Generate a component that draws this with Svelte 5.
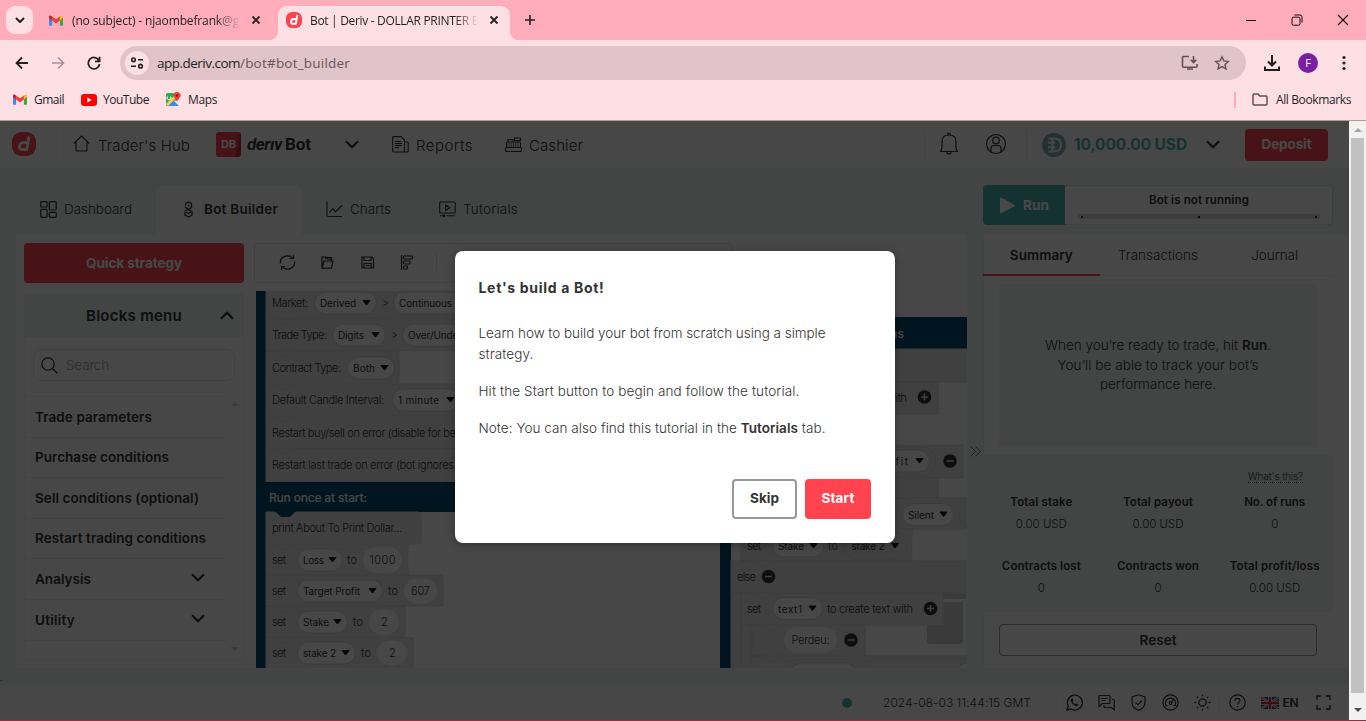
<script>
  function fit(node, width) {
    const natural = node.getBoundingClientRect().width;
    const count = node.textContent.trim().length;
    node.style.letterSpacing = (width - natural) / count + 'px';
  }

  const menu = [
    ['Trade parameters', 117, false],
    ['Purchase conditions', 134, false],
    ['Sell conditions (optional)', 164, false],
    ['Restart trading conditions', 171, false],
    ['Analysis', 56, true],
    ['Utility', 40, true]
  ];

  const stats = [
    ['Total stake', 62, '0.00 USD', 51],
    ['Total payout', 70, '0.00 USD', 51],
    ['No. of runs', 61, '0', 7],
    ['Contracts lost', 79, '0', 7],
    ['Contracts won', 82, '0', 7],
    ['Total profit/loss', 90, '0.00 USD', 51]
  ];

  // Block shapes on the canvas: x, y, width, height
  const blocks = [
    [266, 286, 454, 33], [266, 318.5, 454, 32], [266, 351, 133, 33], [266, 384, 454, 32],
    [266, 416, 454, 33], [266, 448.5, 454, 33],
    [266, 512, 155, 32], [266, 544, 142, 31], [266, 575, 177, 31], [266, 606.5, 139, 31], [266, 637.5, 147, 33]
  ];
  const rightBlocks = [
    [731, 349, 240, 33], [741, 382, 197, 32], [741, 445, 222, 33], [741, 478, 197, 20], [741, 498, 230, 31],
    [741, 529, 171, 32], [731, 561, 240, 32], [731, 593, 10, 76], [741, 593, 202, 32], [741, 625, 11, 44],
    [752, 625, 113, 31], [752, 656, 220, 14]
  ];
  // Dropdown pills: x, y centre, width, text, text width
  const pills = [
    [315, 303, 61, 'Derived', 36], [394, 303, 80, 'Continuous', 53],
    [333, 335, 52, 'Digits', 26], [403, 335, 80, 'Over/Under', 54],
    [348, 368, 46, 'Both', 22], [393, 400, 67, '1 minute', 41],
    [298, 560, 44, 'Loss', 21], [298, 591, 84, 'Target Profit', 57],
    [298, 622, 49, 'Stake', 26], [298, 653, 57, 'stake 2', 33],
    [870, 461, 59, 'Profit', 33], [903, 514.5, 50, 'Silent', 26],
    [773, 546, 50, 'Stake', 26], [773, 608.5, 49, 'text1', 24]
  ];
  const labels = [
    [272, 303, 'Market:', 36], [382, 303, '>', 6],
    [272, 335, 'Trade Type:', 55], [391, 335, '>', 6],
    [272, 368, 'Contract Type:', 69], [272, 400, 'Default Candle Interval:', 112],
    [272, 433, 'Restart buy/sell on error (disable for be', 184],
    [272, 465, 'Restart last trade on error (bot ignores', 182],
    [272, 528, 'print About To Print Dollar...', 130],
    [272, 560, 'set', 14], [347, 560, 'to', 10], [272, 591, 'set', 14], [388, 591, 'to', 10],
    [272, 622, 'set', 14], [353, 622, 'to', 10], [272, 653, 'set', 14], [361, 653, 'to', 10],
    [887, 398, 'with', 20],
    [747, 546, 'set', 14], [828, 546, 'to', 10], [737, 577, 'else', 19],
    [747, 609, 'set', 14], [827, 609, 'to create text with', 86]
  ];
  const values = [
    [363, 560, 39, '1000', 26], [404, 591, 33, '607', 19],
    [369, 622, 30, '2', 6], [377, 653, 30, '2', 6], [784, 640, 53, 'Perdeu:', 38]
  ];
  const knobs = [[924.5, 397, true], [950, 461, false], [768.5, 576.5, false], [930.5, 608.5, true], [851, 640, false]];

  function blockPath([x, y, w, h]) {
    return `M${x} ${y}h9l6 5h9l6-5h${Math.max(w - 33, 2)}q3 0 3 3v${h - 5}q0 2-3 2H${x}z`;
  }
</script>

{#snippet t(text, width, cls = '')}<span class="t {cls}" use:fit={width}>{text}</span>{/snippet}

{#snippet gmail()}
  <svg class="gm" viewBox="0 0 16 12"><path fill="#4285f4" d="M0 1.5V11q0 1 1 1h2.6V5z" /><path fill="#34a853" d="M12.4 12H15q1 0 1-1V1.5L12.4 5z" /><path fill="#fbbc04" d="M12.4 1.5V6L16 3.2V1.6Q16 0 14.3.2z" /><path fill="#c5221f" d="M0 1.6v1.6L3.6 6V1.5L1.7.2Q0 0 0 1.6z" /><path fill="#ea4335" d="M3.6 1.3L8 4.7l4.4-3.4V6L8 9.4 3.6 6z" /></svg>
{/snippet}

{#snippet derivLogo(cls)}
  <svg class={cls} viewBox="0 0 24 24"><rect width="24" height="24" rx="9.500" fill="#ff444f" /><path fill="none" stroke="#fff" stroke-width="2.900" d="M17 4.500L14.700 17.500H10.200Q7.100 17.500 7.600 14.300 8.200 10.600 11.700 10.600H15.500" /></svg>
{/snippet}

{#snippet chevron(cls = '')}
  <svg class="chev {cls}" viewBox="0 0 14 9"><path d="M1 1.2l6 6 6-6" fill="none" stroke="#333" stroke-width="2.2" /></svg>
{/snippet}

<div class="window">
  <div class="tabstrip">
    <div class="search-tabs"><svg viewBox="0 0 10 6"><path d="M1 1l4 4 4-4" fill="none" stroke="#222" stroke-width="2" /></svg></div>
    <div class="btab first">
      {@render gmail()}
      <div class="fade">{@render t('(no subject) - njaombefrank@g', 167)}</div>
      <svg class="x" viewBox="0 0 10 10"><path d="M1.5 1.5l7 7m0-7l-7 7" stroke="#222" stroke-width="1.8" /></svg>
    </div>
    <div class="btab current">
      {@render derivLogo('fav')}
      <div class="fade second">{@render t('Bot | Deriv - DOLLAR PRINTER E', 168)}</div>
      <svg class="x" viewBox="0 0 10 10"><path d="M1.5 1.5l7 7m0-7l-7 7" stroke="#222" stroke-width="1.8" /></svg>
    </div>
    <svg class="plus" viewBox="0 0 12 12"><path d="M6 1v10M1 6h10" stroke="#222" stroke-width="1.6" /></svg>
    <div class="controls">
      <svg viewBox="0 0 12 12"><path d="M1 6.5h10" stroke="#111" /></svg>
      <svg viewBox="0 0 12 12" fill="none" stroke="#111"><rect x="1" y="3.2" width="8" height="8" rx="1.5" /><path d="M3.3 1H9q2 0 2 2v5.6" /></svg>
      <svg viewBox="0 0 12 12"><path d="M1 1l10 10M11 1L1 11" stroke="#111" stroke-width="1.1" /></svg>
    </div>
  </div>

  <div class="toolbar">
    <svg class="nav" viewBox="0 0 16 16" fill="none" stroke="#222" stroke-width="1.8"><path d="M14 8H2.5M8 2.5L2.5 8 8 13.5" /></svg>
    <svg class="nav" viewBox="0 0 16 16" fill="none" stroke="#a8929a" stroke-width="1.6"><path d="M2 8h11.5M8 2.5L13.5 8 8 13.5" /></svg>
    <svg class="nav" viewBox="0 0 16 16" fill="none" stroke="#222" stroke-width="1.8"><path d="M13 5.5A5.7 5.7 0 1 0 13.6 9M13.6 1.8v4.5H9" /></svg>
    <div class="address">
      <div class="site"><svg viewBox="0 0 14 12" fill="none" stroke="#222" stroke-width="1.6"><circle cx="3.5" cy="2.8" r="1.8" /><path d="M8 2.8h5M1 9.2h5" /><circle cx="10.5" cy="9.2" r="1.8" /></svg></div>
      <div class="url">{@render t('app.deriv.com', 83, 'host')}{@render t('/bot#bot_builder', 110)}</div>
      <svg class="install" viewBox="0 0 17 16" fill="none" stroke="#5c5357" stroke-width="1.6"><path d="M8 1.5H2.5q-1 0-1 1v8.8q0 1 1 1H15q1 0 1-1V9M12.5 1v6M9.8 4.8l2.7 2.7 2.7-2.7M6 14h6" /></svg>
      <svg class="star" viewBox="0 0 16 16" fill="none" stroke="#5c5357" stroke-width="1.4"><path d="M8 1.8l1.9 4.1 4.4.5-3.3 3 .9 4.4L8 11.6l-3.9 2.2.9-4.4-3.3-3 4.4-.5z" /></svg>
    </div>
    <svg class="dl" viewBox="0 0 16 16" fill="none" stroke="#1d1d1d" stroke-width="2"><path d="M8 0v10M4 6.5l4 4 4-4M1 11.5V15h14v-3.5" /></svg>
    <div class="avatar">F</div>
    <svg class="dots" viewBox="0 0 4 16" fill="#222"><circle cx="2" cy="2.5" r="1.6" /><circle cx="2" cy="8" r="1.6" /><circle cx="2" cy="13.5" r="1.6" /></svg>
  </div>

  <div class="bookmarks">
    {@render gmail()}{@render t('Gmail', 30)}
    <svg class="yt" viewBox="0 0 16 12"><rect width="16" height="12" rx="3" fill="red" /><path d="M6.4 3.5v5l4.2-2.5z" fill="#fff" /></svg>{@render t('YouTube', 46)}
    <svg class="maps" viewBox="0 0 15 15"><rect y="1" width="13" height="13" rx="1.5" fill="#34a853" /><path d="M1 14L7 8l6 6z" fill="#4285f4" /><path d="M0 12L9 3l2 2-9 9z" fill="#fbd34b" /><path d="M8 9l5 5V7z" fill="#e8eaed" /><path d="M1.5 4.5a2 2 0 1 0 3 0" fill="none" stroke="#fff" /><path d="M11 0a3.6 3.6 0 0 1 3.6 3.6C14.600 6 12 7 11 10 10 7 7.400 6 7.400 3.600A3.600 3.600 0 0 1 11 0z" fill="#ea4335" /><circle cx="11" cy="3.600" r="1.300" fill="#8c1d18" /></svg>{@render t('Maps', 29)}
    <i></i>
    <svg class="folder" viewBox="0 0 16 13" fill="none" stroke="#5c5357" stroke-width="1.500"><path d="M1 11V2q0-1 1-1h4l1.800 2H14q1 0 1 1v7q0 1-1 1H2q-1 0-1-1z" /></svg>{@render t('All Bookmarks', 75)}
  </div>

  <div class="view">
    <div class="page">
      <header>
        {@render derivLogo('logo')}
        <i class="rule r1"></i>
        <svg class="house" viewBox="0 0 17 17" fill="none" stroke="#333" stroke-width="1.100"><path d="M.7 8.500L8.500 1l7.800 7.500M3 6.500V15q0 1 1 1h9q1 0 1-1V6.500" /></svg>
        {@render t("Trader's Hub", 92, 'h16')}
        <div class="db">DB</div>
        <span class="brand">{@render t('derıv', 35, 'it')}{@render t('Bot', 26)}</span>
        {@render chevron('c1')}
        <svg class="rep" viewBox="0 0 17 17" fill="none" stroke="#333" stroke-width="1.100"><path d="M12.500 16H1.600q-1 0-1-1V1.600q0-1 1-1H9L12.500 4zM12.500 6h2.700q1 0 1 1v8q0 1-1 1h-2.700M3 5.500h6M3 7.500h7M3 9.500h7M3 11.500h4" /></svg>
        {@render t('Reports', 57, 'h16')}
        <svg class="cash" viewBox="0 0 17 16" fill="none" stroke="#333" stroke-width="1.100"><rect x=".6" y="10.500" width="15.800" height="4" rx="1" /><path d="M1.500 10.500V6q0-1 1-1h12q1 0 1 1v4.500M3 5V2.500h5V5M9.500 1h6v2.500h-6zM12.500 3.500V5" /><path d="M3.500 7h10M3.500 9h10" stroke-dasharray="1.200 1" /></svg>
        {@render t('Cashier', 54, 'h16')}
        <i class="rule r2"></i>
        <svg class="bell" viewBox="0 0 20 24" fill="none" stroke="#333" stroke-width="1.200"><path d="M1.500 19.500Q3 17.500 3 15V9.500Q3 3 10 3t7 6.500V15q0 2.500 1.500 4.500zM8.500 3Q8.500 1 10 1t1.500 2M8 20q0 2 2 2t2-2" /></svg>
        <svg class="user" viewBox="0 0 22 22" fill="none" stroke="#333" stroke-width="1.200"><circle cx="11" cy="11" r="9.500" /><circle cx="11" cy="7.500" r="3.300" /><path d="M6 18.500V15.500q0-3 3-3h4q3 0 3 3v3" /></svg>
        <i class="rule r3"></i>
        <svg class="coin" viewBox="0 0 24 24"><circle cx="12" cy="12" r="12" fill="#85acb0" /><path d="M10.500 5.500H12q7 0 7 6.500t-7 6.500h-1.500M6.500 5.500h5.500M6.500 18.500h5.500M6 9.800h7M6 14.200h7M10.500 5v14" fill="none" stroke="#fff" stroke-width="1.900" /></svg>
        {@render t('10,000.00 USD', 113, 'bal')}
        {@render chevron('c2')}
        <div class="deposit">{@render t('Deposit', 50)}</div>
      </header>

      <main>
        <section class="left">
          <nav class="tabs">
            <div class="tab dash"><svg viewBox="0 0 17 17" fill="none" stroke="#333" stroke-width="1.200"><rect x=".7" y=".7" width="6.400" height="5.300" rx="1" /><rect x="9.300" y=".7" width="6.900" height="8.300" rx="1" /><rect x=".7" y="8.300" width="6.400" height="8" rx="1" /><rect x="9.300" y="11.300" width="6.900" height="5" rx="1" /></svg>{@render t('Dashboard', 68)}</div>
            <div class="tab on"><svg viewBox="0 0 17 17" fill="none" stroke="#333" stroke-width="1.300"><path d="M5.500 2.500l3-1.500 3 1.500v4L9 8.500 5 6M5.500 2.500v2M4.500 10L8 8.500l4 2v3.500l-3.500 2-3.500-2v-3M6 11l2.500 1.500L11 11M7.500 4.500h2" /></svg>{@render t('Bot Builder', 74)}</div>
            <div class="tab charts"><svg viewBox="0 0 17 17" fill="none" stroke="#333" stroke-width="1.100"><path d="M1 .5V14q0 1.500 1.500 1.500H16M3.500 11.500L7 7.500l2.500 3.500L16 4.500" /></svg>{@render t('Charts', 41)}</div>
            <div class="tab"><svg viewBox="0 0 17 17" fill="none" stroke="#333" stroke-width="1.100"><path d="M1.700 1h13.500q1 0 1 1v9q0 1-1 1H1.700q-1 0-1-1V2q0-1 1-1zM6.500 4v5.500l4.500-2.700zM1 14.800h5M7.500 14.800h8.500" /><circle cx="5" cy="14.800" r=".8" /></svg>{@render t('Tutorials', 55)}</div>
          </nav>
          <div class="builder">
            <aside>
              <div class="quick">{@render t('Quick strategy', 96)}</div>
              <div class="toolbox">
                <div class="tb-head">{@render t('Blocks menu', 96)}{@render chevron('up')}</div>
                <div class="search"><svg viewBox="0 0 17 17" fill="none" stroke="#333" stroke-width="1.300"><circle cx="7" cy="7" r="6.200" /><path d="M11.500 11.500l5 5" /></svg>{@render t('Search', 43)}</div>
                <div class="list-wrap">
                  <div class="list">
                    {#each menu as [name, w, open]}
                      <div class="item">{@render t(name, w)}{#if open}{@render chevron()}{/if}</div>
                    {/each}
                    <div class="item"></div>
                  </div>
                  <div class="arrows"><b></b><b class="down"></b></div>
                </div>
              </div>
            </aside>
            <div class="work">
              <div class="tools">
                <svg viewBox="0 0 17 17" fill="none" stroke="#333" stroke-width="1.200"><path d="M1.500 9.500A7 6.500 0 0 1 13.500 4M15.500 7.500A7 6.500 0 0 1 3.500 13M14.500 .8v3.700h-3.700M2.500 16.200v-3.700h3.700" /></svg>
                <svg viewBox="0 0 17 17" fill="none" stroke="#333" stroke-width="1.200"><path d="M3 14.200V3h4l1.500 2H12v2M3 14.200L5 7h9l-1.500 7.200zM6.500 5V3.500h6V7" /></svg>
                <svg viewBox="0 0 17 17" fill="none" stroke="#333" stroke-width="1.200"><path d="M3 3h10l1.500 1.500V14H3zM5 3v3.500h7V3M5 14v-4.500h7V14M6.500 11.500h4" /></svg>
                <svg viewBox="0 0 17 17" fill="none" stroke="#333" stroke-width="1.200"><path d="M2.500 1v15" /><rect x="4.500" y="2" width="9" height="3" rx=".8" /><rect x="4.500" y="7" width="6.500" height="3" rx=".8" /><rect x="4.500" y="12" width="4" height="3" rx=".8" /></svg>
                <i></i>
              </div>
              <svg class="canvas" viewBox="256 291 711 377">
                <rect x="256" y="280" width="464" height="232" fill="#064e72" />
                <rect x="256" y="500" width="10" height="170" fill="#064e72" />
                <rect x="266" y="286" width="454" height="194" fill="#e5e5e5" />
                <rect x="266" y="520" width="139" height="150" fill="#e5e5e5" />
                <rect x="399" y="351" width="321" height="33" fill="#fff" />
                <rect x="720" y="317" width="250" height="32" fill="#064e72" />
                <rect x="720" y="317" width="11" height="360" fill="#064e72" />
                <g class="block">
                  {#each blocks as b}<path d={blockPath(b)} />{/each}
                  {#each rightBlocks as b}<rect x={b[0]} y={b[1]} width={b[2]} height={b[3]} />{/each}
                </g>
                <path class="notch" d="M741 561h10l6 5h9l6-5M741 593h10l6 5h9l6-5M752 625h10l6 5h9l6-5M752 656h10l6 5h9l6-5" />
                <path d="M275 511l6 6h9l6-6z" fill="#064e72" />
                <path d="M943 592l23 2v5h-23z" fill="#cfcfcf" />
                <path d="M943 602h20v38q0 4-4 4h-28q-4 0-4-4v-15h16z" fill="#cfcfcf" />
                <g class="outer">
                  <rect x="850" y="447" width="86" height="29" rx="14" /><rect x="959" y="501" width="40" height="27" rx="13" />
                  <rect x="844" y="532" width="63" height="27" rx="13" /><rect x="784" y="659" width="75" height="27" rx="13" /><rect x="863" y="659" width="150" height="27" rx="13" />
                </g>
                <g class="pill">
                  {#each pills as [x, y, w, text, tw]}
                    <rect x={x - 0.5} y={y - 11} width={w + 1} height="22" rx="11" />
                    <text x={x + 5} y={y + 4.200} textLength={tw}>{text}</text>
                    <path d="M{x + w - 13} {y - 2.500}h7l-3.500 4.500z" />
                  {/each}
                  <rect x="791" y="663" width="65" height="22" rx="11" /><rect x="956" y="663" width="65" height="22" rx="11" />
                  <text x="851.500" y="549.500" textLength="33">stake 2</text><path d="M891.500 543.500h7l-3.500 4.500z" />
                </g>
                <g class="value">
                  {#each values as [x, y, w, text, tw]}
                    <rect {x} y={y - 12.500} width={w} height="25" rx="12.500" />
                    <text x={x + (w - tw) / 2} y={y + 4} textLength={tw}>{text}</text>
                  {/each}
                </g>
                <g class="label">
                  {#each labels as [x, y, text, tw]}<text {x} y={y + 4} textLength={tw}>{text}</text>{/each}
                </g>
                <text class="title" x="269" y="502" textLength="98">Run once at start:</text>
                <text class="title" x="841" y="338" textLength="63">conditions</text>
                {#each knobs as [x, y, plus]}
                  <circle cx={x} cy={y} r="6.800" fill="#333" /><path d={plus ? `M${x - 3.500} ${y}h7M${x} ${y - 3.500}v7` : `M${x - 3.500} ${y}h7`} stroke="#e5e5e5" stroke-width="1.500" />
                {/each}
              </svg>
            </div>
          </div>
        </section>

        <div class="handle"><svg viewBox="0 0 11 11" fill="none" stroke="#777"><path d="M.7.7l4.800 4.800-4.800 4.800M5.500.7l4.800 4.800-4.800 4.800" /></svg></div>

        <section class="right">
          <div class="runner">
            <div class="run"><svg viewBox="0 0 15 17"><path d="M0 1.500Q0 0 1.500.8l12.500 6.700q1.200 1 0 2L1.500 16.200Q0 17 0 15.500z" fill="#fff" /></svg>{@render t('Run', 26)}</div>
            <div class="status">{@render t('Bot is not running', 100)}<div class="bar"><b></b><b></b><b></b></div></div>
          </div>
          <div class="drawer">
            <div class="dtabs"><div class="on">{@render t('Summary', 63)}</div><div>{@render t('Transactions', 80)}</div><div>{@render t('Journal', 47)}</div></div>
            <div class="ready">
              <p><span class="t" use:fit={226}>When you’re ready to trade, hit <b>Run</b>.</span></p>
              <p>{@render t('You’ll be able to track your bot’s', 201)}</p>
              <p>{@render t('performance here.', 116)}</p>
            </div>
            <div class="stats">
              <div class="what">{@render t("What's this?", 55)}</div>
              <div class="grid">
                {#each stats as [label, lw, value, vw]}
                  <div class="cell"><b>{@render t(label, lw)}</b>{@render t(value, vw)}</div>
                {/each}
              </div>
            </div>
            <div class="reset">{@render t('Reset', 37)}</div>
          </div>
        </section>
      </main>
      <div class="stray">.</div>

      <footer>
        <i class="dot"></i>
        {@render t('2024-08-03 11:44:15 GMT', 148)}
        <i class="rule f1"></i>
        <svg class="fi" viewBox="0 0 17 17" fill="none" stroke="#333" stroke-width="1.300"><path d="M1 16l1.200-4A7.500 7.500 0 1 1 5 15z" /><path d="M5.500 4.500q-1.500 1-.5 3.300 1.500 3.200 4.500 4.200 2 .5 2.800-1.300l-2-1.500-1.300 1Q7.200 9 6.600 7.400L7.500 6.500 6.500 4.300z" fill="#333" stroke="none" /></svg>
        <svg class="fi" viewBox="0 0 17 17" fill="none" stroke="#333" stroke-width="1.200"><path d="M11.500 9.500h-7L1 12.500v-10q0-1 1-1h9q1 0 1 1v6q0 1-.5 1zM3.500 4.500h6M3.500 6.500h4M14 5.500h1.300q1 0 1 1V16l-2.800-2.500H7q-1 0-1-1V11.500" /></svg>
        <svg class="fi" viewBox="0 0 17 17" fill="none" stroke="#333" stroke-width="1.200"><path d="M8.500.8L15 3v5q0 6-6.500 8.300Q2 14 2 8V3zM5.500 8.500l2.300 2.300L12 6.500" /></svg>
        <svg class="fi" viewBox="0 0 17 17" fill="none" stroke="#333" stroke-width="1.200"><circle cx="8.500" cy="8.500" r="7.700" /><path d="M3.800 11.500A5.200 5.200 0 1 1 13.200 11.500M9.500 7.500l2.500-2M3.500 11.500h2M11.500 11.500h2" /><circle cx="8.500" cy="9" r="1.300" /></svg>
        <svg class="fi" viewBox="0 0 17 17" fill="none" stroke="#333" stroke-width="1.300"><circle cx="8.500" cy="8.500" r="3.700" /><path d="M8.500 .5v1.800M8.500 14.700v1.800M.5 8.500h1.800M14.700 8.500h1.800M2.800 2.800l1.300 1.300M12.900 12.900l1.300 1.300M2.800 14.200l1.300-1.300M12.900 4.100l1.300-1.300" /></svg>
        <i class="rule f2"></i>
        <svg class="fi help" viewBox="0 0 17 17" fill="none" stroke="#333" stroke-width="1.200"><circle cx="8.500" cy="8.500" r="7.700" /><path d="M6 6.800Q6 4.300 8.500 4.300T11 6.600Q11 8 9.500 8.700 8.500 9.200 8.500 10.500M8.500 12v1.300" /></svg>
        <svg class="flag" viewBox="0 0 18 12"><rect width="18" height="12" fill="#1b4d9e" /><path d="M0 0l18 12M18 0L0 12" stroke="#fff" stroke-width="2.400" /><path d="M0 0l18 12M18 0L0 12" stroke="#d32f38" stroke-width=".9" /><path d="M9 0v12M0 6h18" stroke="#fff" stroke-width="4" /><path d="M9 0v12M0 6h18" stroke="#d32f38" stroke-width="2.300" /></svg>
        <b>{@render t('EN', 16)}</b>
        <svg class="full" viewBox="0 0 15 15" fill="none" stroke="#333" stroke-width="1.300"><path d="M1 5V1h4M10 1h4v4M14 10v4h-4M5 14H1v-4" /></svg>
      </footer>

      <div class="overlay">
        <div class="modal">
          <h2>{@render t("Let's build a Bot!", 126)}</h2>
          <p>{@render t('Learn how to build your bot from scratch using a simple', 347)}<br />{@render t('strategy.', 55)}</p>
          <p>{@render t('Hit the Start button to begin and follow the tutorial.', 321)}</p>
          <p><span class="t" use:fit={347}>Note: You can also find this tutorial in the <b>Tutorials</b> tab.</span></p>
          <div class="actions"><div class="skip">{@render t('Skip', 29)}</div><div class="start">{@render t('Start', 33)}</div></div>
        </div>
      </div>
    </div>
    <div class="scroll"><b></b><i></i><b class="down"></b></div>
  </div>
  <div class="edge"></div>
</div>

<style>
  :global(body) { overflow: hidden; }
  .window { width: 1366px; height: 721px; display: flex; flex-direction: column; font-family: 'Open Sans', sans-serif; font-size: 12px; color: #1f1f1f; background: #fedfe4; overflow: hidden; }
  .window :global(*) { box-sizing: border-box; }
  svg { display: block; flex: none; }
  b { font-weight: 600; }
  .t { display: inline-block; white-space: nowrap; }

  .tabstrip { height: 40px; flex: none; background: #ffadbb; display: flex; align-items: center; padding-left: 6px; }
  .search-tabs { width: 27px; height: 28px; border-radius: 9px; background: #fedfe4; display: grid; place-items: center; }
  .search-tabs svg { width: 10px; height: 6px; }
  .btab { display: flex; align-items: center; height: 34px; }
  .first { padding-left: 16px; width: 245px; }
  .gm { width: 14px; height: 11px; }
  .fade { width: 168px; margin: 0 11px 0 9px; overflow: hidden; mask-image: linear-gradient(90deg, #000 86%, transparent); }
  .fade.second { margin-left: 8px; margin-right: 11px; width: 168px; }
  .x { width: 10px; height: 10px; }
  .current { position: relative; align-self: flex-end; width: 232px; padding: 0 0 6px 8px; background: #fedfe4; border-radius: 9px 9px 0 0; }
  .current::before, .current::after { content: ''; position: absolute; bottom: 0; width: 9px; height: 9px; }
  .current::before { left: -9px; background: radial-gradient(circle at 0 0, #ffadbb 9px, #fedfe4 9.500px); }
  .current::after { right: -9px; background: radial-gradient(circle at 100% 0, #ffadbb 9px, #fedfe4 9.500px); }
  .fav { width: 16px; height: 16px; }
  .plus { width: 12px; height: 12px; margin-left: 14px; }
  .controls { margin-left: auto; display: flex; gap: 34px; padding-right: 17px; }
  .controls svg { width: 12px; height: 12px; }

  .toolbar { height: 46px; flex: none; display: flex; align-items: center; padding-left: 14px; }
  .nav { width: 16px; height: 16px; margin-right: 20px; }
  .address { width: 1126px; margin-left: -2px; height: 34px; border-radius: 17px; background: #e0c4c9; display: flex; align-items: center; padding: 0 16px 0 5px; }
  .site { width: 24px; height: 24px; border-radius: 12px; background: #fedfe4; display: grid; place-items: center; }
  .site svg { width: 14px; height: 12px; }
  .url { font-size: 13.500px; margin-left: 8px; color: #66565b; flex: 1; }
  :global(.host) { color: #1f1f1f; }
  .install { width: 17px; height: 16px; margin-right: 16px; }
  .star { width: 16px; height: 16px; }
  .dl { width: 16px; height: 16px; margin-left: 18px; }
  .avatar { width: 20px; height: 20px; border-radius: 10px; background: #7b1fa2; color: #fff; font-size: 11px; line-height: 20px; text-align: center; margin-left: 18px; }
  .dots { width: 4px; height: 16px; margin-left: 24px; }

  .bookmarks { height: 35px; flex: none; display: flex; align-items: center; padding: 0 15px 7px 13px; border-bottom: 1px solid #b3999e; }
  .bookmarks .t { margin-left: 7px; }
  .yt { width: 16px; height: 12px; margin-left: 17px; }
  .yt + .t { margin-left: 6px; }
  .maps { width: 15px; height: 15px; margin-left: 17px; }
  .bookmarks i { width: 2px; height: 16px; background: #ffadbb; margin-left: auto; margin-right: 16px; }
  .folder { width: 16px; height: 13px; }
  .bookmarks .folder + .t { margin-left: 8px; }

  .view { height: 599px; flex: none; display: flex; }
  .page { width: 1349px; position: relative; display: flex; flex-direction: column; background: #f0f4f3; font-family: Inter, sans-serif; font-size: 13.500px; font-weight: 300; color: #333; }
  .edge { height: 1px; background: #93303b; }

  header { height: 47px; flex: none; background: #fff; display: flex; align-items: center; padding-left: 12px; }
  .logo { width: 24px; height: 24px; margin-bottom: 2px; }
  .rule { width: 1px; height: 30px; background: #ebeeee; flex: none; }
  .r1 { margin: 0 16px 0 20px; }
  .house { width: 17px; height: 17px; margin: 0 8px 3px 0; }
  :global(.h16) { font-size: 15px; padding-top: 2px; }
  .db { width: 25px; height: 25px; margin: 0 6px 0 26px; background: linear-gradient(100deg, #f9414d 80%, #c92d38 82%); border-radius: 3px; color: #fff; font: 700 11px/25px Inter, sans-serif; text-align: center; }
  .brand { font: 700 17px Roboto, sans-serif; display: flex; gap: 3px; margin-bottom: 1px; }
  :global(.it) { font-style: italic; }
  .chev { width: 14px; height: 9px; }
  :global(.chev.up) { transform: rotate(180deg); }
  :global(.chev.c1) { margin: 0 33px 0 34px; }
  .rep { width: 17px; height: 17px; margin-right: 7px; }
  .cash { width: 17px; height: 16px; margin: 0 7px 0 32px; }
  .r2 { margin-left: 341px; }
  .bell { width: 20px; height: 24px; margin: 0 26px 1px 14px; }
  .user { width: 22px; height: 22px; margin: 0 19px 1px 0; }
  .coin { width: 24px; height: 24px; margin: 0 8px 0 15px; }
  :global(.bal) { font-weight: 700; font-size: 15.500px; color: #4bb4b3; }
  :global(.chev.c2) { margin: 0 25px 0 19px; }
  .deposit { width: 83px; height: 32px; background: #ff444f; color: #fff; font-weight: 700; border-radius: 4px; text-align: center; line-height: 31px; }

  main { height: 500px; flex: none; display: flex; padding: 17px 0 0 16px; }
  .left { width: 951px; }
  .tabs { height: 50px; display: flex; }
  .tab { display: flex; align-items: center; gap: 7px; padding: 0 24px 2px 24px; }
  .tab svg { width: 17px; height: 17px; }
  .on { font-weight: 600; }
  .tab.on { background: #fff; border-radius: 8px 8px 0 0; width: 146px; }
  .builder { height: 433px; background: #fff; display: flex; padding: 8px 0 0 8px; }
  aside { width: 220px; }
  .quick { height: 40px; border-radius: 4px; background: #ff444f; color: #fff; font-weight: 700; line-height: 40px; text-align: center; }
  .toolbox { margin-top: 10px; height: 367px; border: 1px solid #f0f3f3; }
  .tb-head { height: 43px; background: #f0f4f3; display: flex; align-items: center; padding: 0 9px 0 61px; font-size: 15px; font-weight: 600; justify-content: space-between; }
  .search { margin: 12px 8px 15px; height: 32px; border: 1px solid #e6e8e8; border-radius: 8px; display: flex; align-items: center; padding-left: 7px; gap: 8px; color: #a5a5a5; }
  .search svg { width: 17px; height: 17px; }
  .list-wrap { display: flex; height: 261px; }
  .list { width: 201px; }
  .item { height: 40.600px; border-top: 1px solid #eef1f1; display: flex; align-items: center; justify-content: space-between; padding: 0 21px 1px 10px; font-weight: 600; }
  .item .t { padding-top: 0.500px; }
  .item :global(.chev) { margin-bottom: 2px; }
  .item:last-child { height: 20px; }
  .arrows { display: flex; flex-direction: column; justify-content: space-between; padding: 6px 4px 6px 5px; }
  .arrows b { border: 4px solid transparent; border-top: 0; border-bottom-color: #d5d5d5; }
  .arrows .down { border-top: 4px solid #d5d5d5; border-bottom: 0; }
  .work { width: 723px; padding-left: 10px; }
  .tools { width: 478px; height: 40px; border: 1px solid #e3e5e5; border-radius: 4px; display: flex; align-items: center; padding: 0 0 2px 23.500px; gap: 23px; }
  .tools svg { width: 17px; height: 17px; }
  .tools i { width: 1px; height: 17px; background: #e0e0e0; margin-left: -3px; }
  .canvas { width: 711px; height: 377px; margin: 8px 0 0 2px; font-family: Inter, sans-serif; fill: #333; }
  .block path, .block rect { fill: #e5e5e5; stroke: #dadada; stroke-width: 1; }
  .notch { fill: none; stroke: #dadada; }
  .outer rect { fill: #e5e5e5; stroke: #d9d9d9; }
  .pill rect { fill: #fff; stroke: #d3d3d3; }
  .pill text { font-size: 10px; font-weight: 400; }
  .pill path { fill: #111; stroke: #111; stroke-linejoin: round; }
  .value rect { fill: #fff; }
  .value text, .label text { font-size: 11px; font-weight: 300; }
  .title { fill: #fff; font-size: 12px; font-weight: 500; }

  .handle { width: 16px; padding-left: 3px; padding-top: 261px; }
  .handle svg { width: 11px; height: 11px; }
  .right { width: 366px; }
  .runner { width: 350px; height: 40px; display: flex; margin-bottom: 10px; }
  .run { width: 82px; background: #4bb4b3; color: #fff; font-weight: 700; border-radius: 4px 0 0 4px; display: flex; align-items: center; padding-left: 17px; gap: 8px; }
  .run svg { width: 15px; height: 17px; }
  .status { flex: 1; background: #fff; border: 1px solid #d9dede; border-left: 0; border-radius: 0 4px 4px 0; font-size: 11.500px; font-weight: 600; text-align: center; padding: 7px 0 0 1px; line-height: 14px; }
  .bar { width: 242px; height: 5px; border-radius: 3px; background: #d6dada; margin: 7px auto 0 12px; display: flex; justify-content: space-between; align-items: center; padding: 0 3px; }
  .bar b { width: 2px; height: 2px; background: #222; }
  .drawer { height: 433px; background: #fff; border-left: 1px solid #e9eded; }
  .dtabs { width: 350px; height: 41px; display: grid; grid-template-columns: repeat(3, 1fr); text-align: center; line-height: 40px; border-bottom: 1px solid #eef1f1; margin-left: -1px; }
  .dtabs .on { border-bottom: 2px solid #ff444f; height: 41px; }
  .ready { width: 318px; height: 163px; margin: 8px 0 8px 15px; background: #f0f4f3; padding-top: 52px; text-align: center; line-height: 19.600px; }
  .ready p { margin: 0; }
  .stats { width: 350px; height: 157px; background: #f0f4f3; margin-left: -1px; font-size: 11.500px; }
  .what { padding: 15px 30px 0 0; height: 36px; text-align: right; font-size: 10px; line-height: 12px; }
  .what .t { border-bottom: 1px dotted #333; }
  .grid { display: grid; grid-template-columns: repeat(3, 1fr); row-gap: 20px; }
  .cell { height: 44px; text-align: center; line-height: 22px; display: flex; flex-direction: column; align-items: center; }
  .reset { width: 318px; height: 32px; margin: 12px 0 0 15px; border: 1px solid #999; border-radius: 4px; text-align: center; line-height: 30px; font-weight: 600; }
  .stray { height: 17px; line-height: 18px; font-size: 10px; }

  footer { height: 35px; background: #fff; display: flex; align-items: center; padding-left: 842px; font-size: 12px; }
  .dot { width: 10px; height: 10px; border-radius: 5px; background: #4bb4b3; margin-right: 31px; }
  .fi { width: 17px; height: 17px; margin-right: 15px; }
  footer .rule { height: 16px; }
  .f1 { margin: 0 9px 0 24.500px; }
  .f2 { margin: 0 9px 0 -7px; }
  .flag { width: 18px; height: 12px; margin-right: 4px; }
  .full { width: 15px; height: 15px; margin-left: 17px; }

  .overlay { position: absolute; inset: 0; background: rgba(0, 0, 0, 0.72); display: flex; justify-content: center; align-items: flex-start; padding-top: 130px; padding-left: 1px; }
  .modal { width: 440px; height: 292px; background: #fff; border-radius: 8px; padding: 24px 24px 24px 23.500px; display: flex; flex-direction: column; box-shadow: 0 2px 8px rgba(0, 0, 0, 0.3); }
  h2 { font-size: 14px; font-weight: 700; line-height: 26px; margin: 0 0 22px; }
  .modal p { margin: 0 0 16px; line-height: 21px; }
  .actions { margin-top: auto; display: flex; justify-content: flex-end; gap: 8px; font-weight: 700; line-height: 35px; text-align: center; }
  .skip { width: 65px; height: 40px; border: 2px solid #999; border-radius: 4px; }
  .start { width: 66px; height: 40px; background: #ff444f; color: #fff; border-radius: 4px; line-height: 39px; }

  .scroll { width: 17px; background: #f1f1f1; display: flex; flex-direction: column; align-items: center; padding: 7px 0 6px; }
  .scroll b { border: 4px solid transparent; border-top: 0; border-bottom-color: #a3a3a3; }
  .scroll i { width: 13px; height: 555px; margin: 6px 0 15px; background: #c1c1c1; }
  .scroll .down { border-top: 4px solid #505050; border-bottom: 0; }
</style>
